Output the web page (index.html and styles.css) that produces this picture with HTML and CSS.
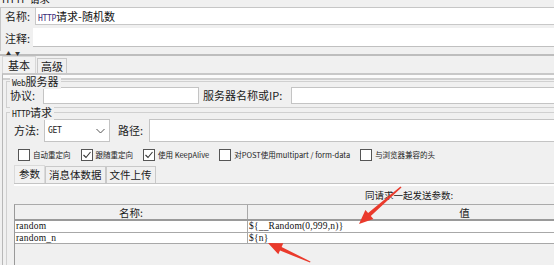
FILE: index.html
```html
<!DOCTYPE html>
<html>
<head>
<meta charset="utf-8">
<link rel="stylesheet" href="styles.css">
</head>
<body>
<div class="app">
  <div class="top-strip"><span>HTTP 请求</span></div>
  <div class="meta">
    <div class="meta-row r1">
      <div class="lbl">名称:</div>
      <div class="field"><span class="pix">HTTP</span>请求-随机数</div>
    </div>
    <div class="meta-row r2">
      <div class="lbl">注释:</div>
      <div class="field"></div>
    </div>
  </div>
  <div class="splitter"><span class="arr">▲</span><span class="arr">▼</span></div>
  <div class="tabs">
    <div class="tab sel">基本</div>
    <div class="tab">高级</div>
  </div>
  <div class="pane">
    <div class="strip"></div>
    <div class="fs fs-web">
      <div class="legend"><span class="pix">Web</span>服务器</div>
      <div class="row">
        <div class="lbl2">协议:</div>
        <div class="inp w-proto"></div>
        <div class="lbl2 lbl-ip">服务器名称或IP:</div>
        <div class="inp grow"></div>
      </div>
    </div>
    <div class="fs fs-http">
      <div class="legend"><span class="pix">HTTP</span>请求</div>
      <div class="row method">
        <div class="lbl2">方法:</div>
        <div class="select"><span class="pix">GET</span><svg class="chev" width="9" height="6" viewBox="0 0 9 6"><path d="M0.5 1 L4.5 5 L8.5 1" fill="none" stroke="#555" stroke-width="1"/></svg></div>
        <div class="lbl2 lbl-path">路径:</div>
        <div class="inp grow tall"></div>
      </div>
      <div class="checks">
        <label class="chk"><span class="box"></span>自动重定向</label>
        <label class="chk"><span class="box on"><svg width="10" height="10" viewBox="0 0 10 10"><path d="M1.5 5 L4 7.5 L8.5 2" fill="none" stroke="#333" stroke-width="1.1"/></svg></span>跟随重定向</label>
        <label class="chk"><span class="box on"><svg width="10" height="10" viewBox="0 0 10 10"><path d="M1.5 5 L4 7.5 L8.5 2" fill="none" stroke="#333" stroke-width="1.1"/></svg></span>使用 KeepAlive</label>
        <label class="chk"><span class="box"></span>对POST使用multipart / form-data</label>
        <label class="chk"><span class="box"></span>与浏览器兼容的头</label>
      </div>
      <div class="subtabs">
        <div class="stab sel">参数</div>
        <div class="stab">消息体数据</div>
        <div class="stab">文件上传</div>
      </div>
      <div class="spane">
        <div class="caption">同请求一起发送参数:</div>
        <div class="table">
          <div class="thead">
            <div class="c1">名称:</div>
            <div class="c2">值</div>
          </div>
          <div class="tr">
            <div class="c1 mono">random</div>
            <div class="c2 mono">${__Random(0,999,n)}</div>
          </div>
          <div class="tr">
            <div class="c1 mono">random_n</div>
            <div class="c2 mono">${n}</div>
          </div>
        </div>
      </div>
    </div>
  </div>
</div>
<svg class="arrows" width="554" height="265" viewBox="0 0 554 265">
  <polygon fill="#ea3a2c" points="400.5,186.5 401.5,187.5 370.8,216.1 373.4,219.1 359,224 365.4,210.1 368.1,213.1"/>
  <polygon fill="#ea3a2c" points="310,262.5 310.5,261.5 281.6,247 283.3,243.3 268,243 278.3,254.3 280,250.6"/>
</svg>
</body>
</html>
```
FILE: styles.css
```css
* { box-sizing: border-box; }
html, body { margin: 0; padding: 0; }
body {
  width: 554px;
  height: 265px;
  overflow: hidden;
  background: #f0f0f0;
  font-family: "Noto Sans CJK SC", "DejaVu Sans", sans-serif;
  font-size: 11px;
  color: #1a1a1a;
  position: relative;
}
.app { width: 554px; height: 265px; overflow: hidden; }
.pix { font-family: "DejaVu Sans Mono", monospace; font-size: 8px; letter-spacing: -0.3px; }

.top-strip { height: 7px; overflow: hidden; padding-left: 2px; line-height: 12px; }
.top-strip span { display: block; margin-top: -7px; font-size: 10px; color: #111; }

.meta { border-top: 1px solid #c6c6c6; border-left: 1px solid #c6c6c6; }
.meta-row { display: flex; }
.meta-row .lbl { width: 34px; padding-left: 4px; line-height: 16px; font-size: 11px; }
.meta-row .field { flex: 1; background: #fff; }
.r1 { height: 17px; }
.r1 .field { border-bottom: 1px solid #c8c8c8; border-left: 1px solid #c8c8c8; line-height: 16px; padding-left: 2px; color: #111; }
.r1 .field .pix { color: #3a2d7a; }
.r2 { height: 23px; margin-top: 3px; }
.r2 .lbl { width: 32px; line-height: 20px; }
.r2 .field { border-bottom: 1px solid #c0c0c0; height: 19px; }

.splitter { height: 5px; border-bottom: 2px solid #bdbdbd; display: flex; gap: 4px; padding-left: 6px; line-height: 4px; }
.arr { font-size: 5px; color: #333; }

.tabs { display: flex; height: 17px; padding-left: 2px; align-items: flex-end; }
.tab { height: 15px; line-height: 14px; padding: 0 3px; font-size: 11px; border: 1px solid #c9c9c9; border-bottom: none; margin-right: 1px; }
.tab.sel { height: 17px; line-height: 16px; padding: 0 5px; border-color: #d8d8d8; background: #f2f2f2; }

.pane { border-top: 2px solid #c8c8c8; border-left: 1px solid #b8b8b8; margin-left: 2px; padding-left: 3px; }
.strip { height: 5px; background: #fbfbfb; border-bottom: 2px solid #cfcfcf; margin-left: -3px; }

.fs { position: relative; border: 1px solid #d0d0d0; border-right: none; }
.legend { position: absolute; top: -6px; left: 3px; background: #f0f0f0; padding: 0 2px; font-size: 11px; line-height: 11px; }
.fs-web { margin-top: 1px; height: 27px; padding: 5px 0 0 3px; }
.row { display: flex; align-items: center; }
.lbl2 { font-size: 11px; line-height: 15px; }
.inp { background: #fff; border: 1px solid #c4c4c4; height: 17px; }
.w-proto { width: 156px; margin-left: 8px; }
.lbl-ip { margin-left: 4px; }
.grow { flex: 1; margin-left: 9px; border-right: none; }

.fs-http { margin-top: 4px; height: 160px; padding: 6px 0 0 7px; }
.method { height: 23px; }
.select { width: 66px; height: 23px; margin-left: 5px; background: #fff; border: 1px solid #c4c4c4; display: flex; align-items: center; justify-content: space-between; padding: 0 4px 0 3px; }
.select .pix { font-size: 8px; color: #222; }
.lbl-path { margin-left: 8px; }
.tall { height: 23px; margin-left: 6px; }

.checks { display: flex; margin-top: 5px; padding-left: 4px; height: 15px; align-items: center; font-size: 7.5px; color: #222; }
.chk { display: flex; align-items: center; margin-right: 10px; white-space: nowrap; }
.box { width: 12px; height: 12px; border: 1px solid #555; background: #fff; margin-right: 3px; display: flex; align-items: center; justify-content: center; }

.subtabs { display: flex; margin-top: 3px; height: 18px; align-items: flex-end; }
.stab { height: 17px; line-height: 16px; padding: 0 3px; font-size: 10.5px; border: 1px solid #c9c9c9; border-bottom: none; }
.stab.sel { padding: 0 4px; height: 18px; border-color: #dadada; background: #f2f2f2; }

.spane { border-top: 1px solid #c4c4c4; width: 900px; height: 90px; }
.caption { border-top: 2px solid #fdfdfd; height: 20px; text-align: center; width: 790px; font-size: 9.5px; line-height: 18px; }
.table { border-top: 1px solid #aaa; border-left: 1px solid #999; width: 900px; height: 80px; }
.thead { display: flex; height: 16px; border-bottom: 2px solid #9a9a9a; background: #f0f0f0; }
.thead div { text-align: center; font-size: 10.5px; line-height: 15px; }
.c1 { width: 233px; border-right: 1px solid #a8a8a8; }
.c2 { width: 434px; border-right: 1px solid #a8a8a8; }
.tr { display: flex; height: 12px; background: #fff; border-bottom: 1px solid #a8a8a8; }
.tr:last-child { height: 11px; }
.mono { font-family: "Liberation Serif", "DejaVu Serif", serif; font-size: 9.5px; line-height: 11px; padding-left: 1px; color: #111; letter-spacing: 0.2px; }

.arrows { position: absolute; left: 0; top: 0; pointer-events: none; }
```
